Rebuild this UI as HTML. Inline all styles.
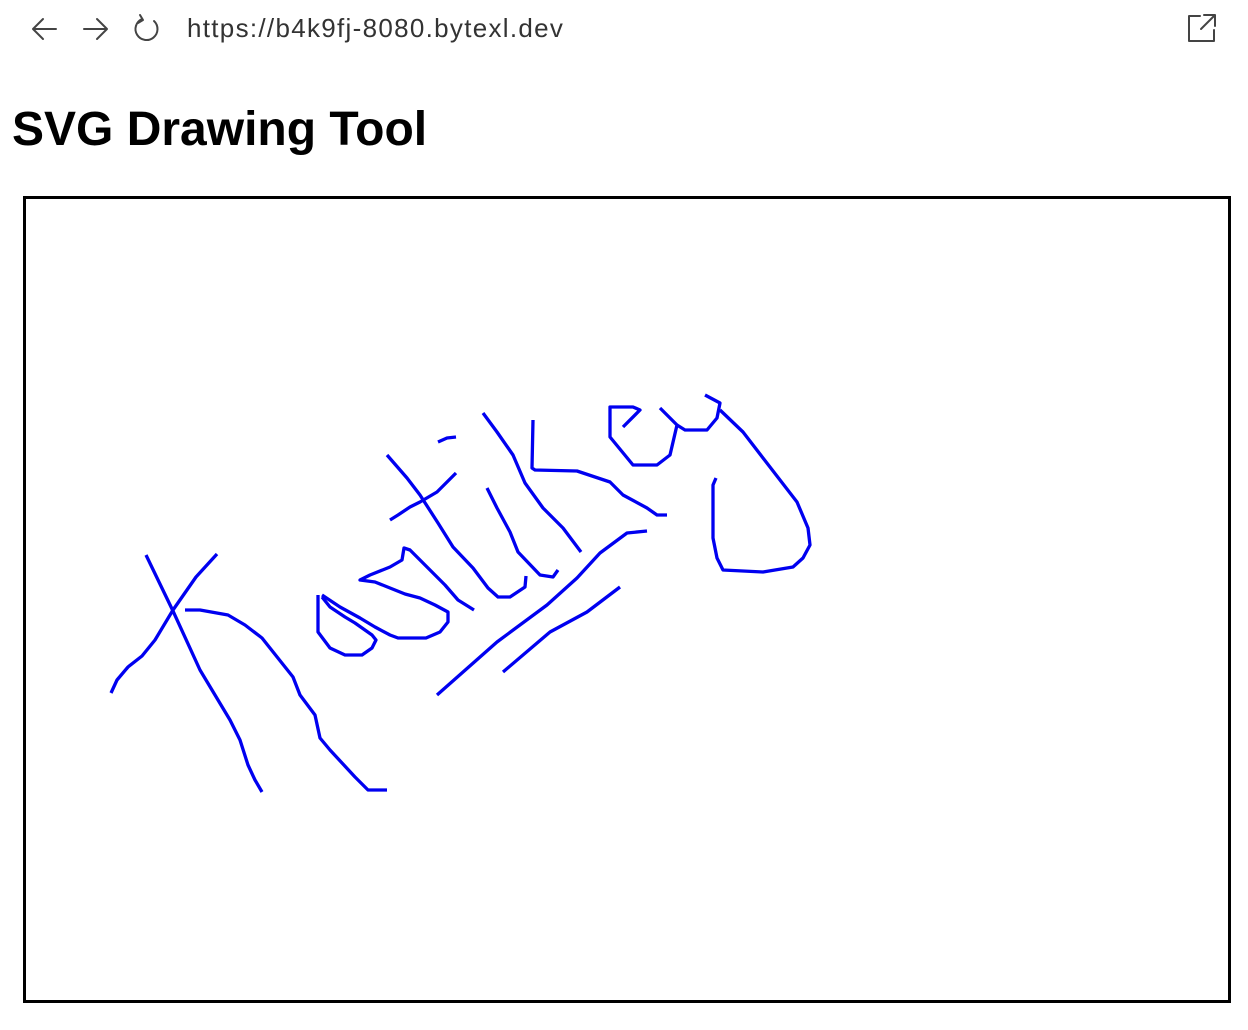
<!DOCTYPE html>
<html><head><style>
body{margin:0;width:1248px;height:1030px;background:#fff;font-family:"Liberation Sans",sans-serif;overflow:hidden;position:relative}
.url{position:absolute;left:187px;top:13px;font-size:26px;letter-spacing:1.3px;color:#333}
h1{position:absolute;left:12px;top:102px;margin:0;font-size:48px;font-weight:bold;color:#000}
.box{position:absolute;left:23px;top:196px;width:1202px;height:801px;border:3px solid #000}
</style></head><body>
<svg width="1248" height="60" style="position:absolute;left:0;top:0" fill="none" stroke="#444" stroke-width="2" stroke-linecap="round" stroke-linejoin="round">
<path d="M56 29H33M43 19L33 29L43 39"/>
<path d="M84 29H107M97 19L107 29L97 39"/>
<path d="M142 19A11 11 0 1 0 154 21M140 15L143 20L138 23"/>
<path d="M1200 16H1189V41H1214V30M1204 15H1215V26M1215 15L1201 29"/>
</svg>
<div class="url">https://b4k9fj-8080.bytexl.dev</div>
<h1>SVG Drawing Tool</h1>
<div class="box"></div>
<svg width="1248" height="1030" style="position:absolute;left:0;top:0" fill="none" stroke="#0000f0" stroke-width="3.3" stroke-linejoin="round">
<path d="M146 555L173 611L200 670L230 720L240 740L248 765L255 780L262 792"/>
<path d="M217 554L196 577L173 610L155 640L142 656L128 667L117 680L111 693"/>
<path d="M185 610L200 610L228 615L245 625L262 638L293 677L300 695L315 715L320 738L330 750L355 777L368 790L387 790"/>
<path d="M318 595L318 632L330 648L345 655L362 655L372 648L376 640L372 635L355 623L345 617L330 607L322 597"/>
<path d="M322 595L340 607L360 618L375 627L390 635L398 638L426 638L440 632L448 622L448 612L435 605L420 598L405 594L390 588L375 582L360 580L370 575L390 567L402 560L404 548L410 550L425 565L445 585L458 600L474 610"/>
<path d="M387 455L407 478L420 495L438 523L453 547L473 568L488 588L498 597L510 597L525 587L526 576"/>
<path d="M456 473L437 492L420 502L410 507L398 515L390 520"/>
<path d="M438 442L447 438L456 437"/>
<path d="M483 413L497 432L513 455L525 483L543 508L563 528L581 552"/>
<path d="M487 488L497 508L510 532L518 552L540 575L553 577L558 570"/>
<path d="M533 420L532 468L535 470L577 471L610 482L623 495L647 508L657 515L667 515"/>
<path d="M437 695L497 642L547 605L577 578L600 553L627 533L647 531"/>
<path d="M503 672L550 632L587 612L620 587"/>
<path d="M623 427L640 410L633 407L610 407L610 437L633 465L657 465L670 455L677 425L660 408"/>
<path d="M677 425L685 430L707 430L717 418L720 403L705 395"/>
<path d="M720 410L743 432L763 458L797 502L808 528L810 545L803 558L793 567L763 572L723 570L717 558L713 538L713 485L716 478"/>
</svg>
</body></html>
